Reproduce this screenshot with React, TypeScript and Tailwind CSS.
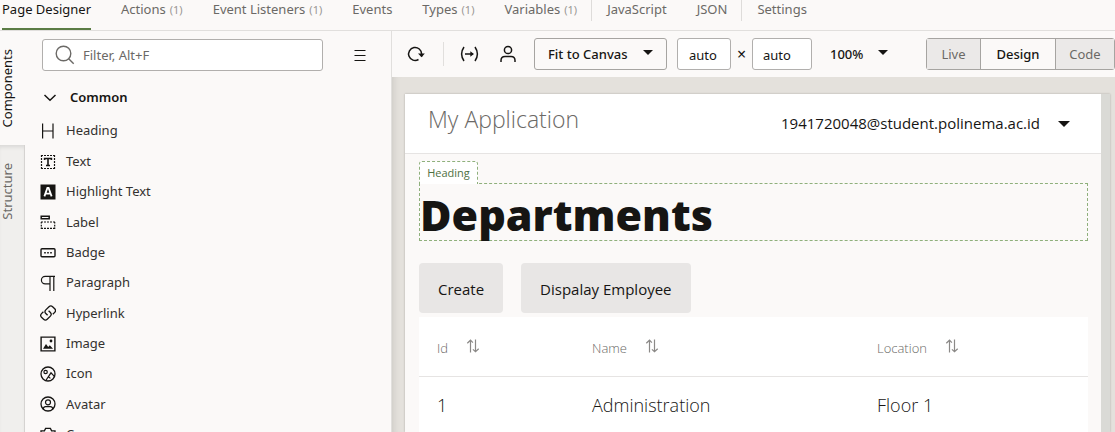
import type { ReactNode } from "react";

const tabs = [
  { label: "Page Designer", active: true },
  { label: "Actions", count: 1 },
  { label: "Event Listeners", count: 1 },
  { label: "Events" },
  { label: "Types", count: 1 },
  { label: "Variables", count: 1 },
  { label: "JavaScript", divided: true },
  { label: "JSON" },
  { label: "Settings", divided: true },
];

function Glyph({ children }: { children: ReactNode }) {
  return (
    <svg viewBox="0 0 16 16" className="size-4 shrink-0" fill="none" stroke="#161513" strokeWidth="1.2" aria-hidden="true">
      {children}
    </svg>
  );
}

const components: { label: string; icon: ReactNode }[] = [
  { label: "Heading", icon: <path d="M2.6.5v15M13 .5v15M2.6 8H13" /> },
  {
    label: "Text",
    icon: (
      <>
        <path d="M1 1.5h14M1 14.5h14" strokeDasharray="2 1" />
        <path d="M1.5 1v14M14.5 1v14" strokeDasharray="2 1" />
        <path d="M4.6 6V4.5h6.8V6M8 4.5v7M6 11.5h4" strokeWidth="1.6" />
      </>
    ),
  },
  {
    label: "Highlight Text",
    icon: (
      <>
        <path d="M.5.5h15v15H.5z" fill="#161513" stroke="none" />
        <path d="M4.4 12.4 7.4 4h1.2l3 8.4M5.6 9.6h4.8" stroke="#fff" strokeWidth="1.8" />
      </>
    ),
  },
  {
    label: "Label",
    icon: (
      <>
        <path d="M1.2 2.2h8v2.6h-8z" strokeWidth="1.5" />
        <path d="M1 8h15M1 14.4h15" strokeDasharray="2 1" />
        <path d="M1.3 8v7M14.7 8v7" strokeDasharray="1.6 1.2" />
      </>
    ),
  },
  {
    label: "Badge",
    icon: (
      <>
        <rect x="1" y="3.8" width="14" height="8" rx="1" strokeWidth="1.4" />
        <path d="M4.2 7.8h1.6M7.2 7.8h1.6M10.2 7.8h1.6" strokeWidth="1.5" />
      </>
    ),
  },
  { label: "Paragraph", icon: <path d="M15 1.3H5.2a3.7 3.7 0 0 0 0 7.6h4.6M10 1.3V16M13.8 1.3V16" /> },
  {
    label: "Hyperlink",
    icon: (
      <>
        <path d="M7 10.3 5.2 8.5a2.6 2.6 0 0 1 0-3.6L8.4 1.7a2.6 2.6 0 0 1 3.6 0l2.1 2.1a2.6 2.6 0 0 1 0 3.6L12.2 9.3" strokeWidth="1.3" transform="translate(.6 0)" />
        <path d="M9 5.7l1.8 1.8a2.6 2.6 0 0 1 0 3.6L7.6 14.3a2.6 2.6 0 0 1-3.6 0L1.9 12.2a2.6 2.6 0 0 1 0-3.6L3.8 6.7" strokeWidth="1.3" transform="translate(-.4 0)" />
      </>
    ),
  },
  {
    label: "Image",
    icon: (
      <>
        <path d="M1.1 1.1h13.8v13.8H1.1z" strokeWidth="1.4" />
        <path d="M3 12.8 6 8l2.2 3L9.8 9.2l3.2 3.6z" fill="#161513" stroke="none" />
        <circle cx="11" cy="5" r="1.4" fill="#161513" stroke="none" />
      </>
    ),
  },
  {
    label: "Icon",
    icon: (
      <>
        <circle cx="8" cy="8" r="7" strokeWidth="1.3" />
        <circle cx="5.6" cy="6" r="1.7" />
        <path d="M5.8 14.5 11 6.8l3.8 4M8.4 10.8l2 1.6" />
      </>
    ),
  },
  {
    label: "Avatar",
    icon: (
      <>
        <circle cx="8" cy="8" r="7" strokeWidth="1.3" />
        <circle cx="8" cy="6.3" r="2.5" />
        <path d="M3.3 13.2v-.4a2.3 2.3 0 0 1 2.3-2.1h4.8a2.3 2.3 0 0 1 2.3 2.1v.4" />
      </>
    ),
  },
  {
    label: "Camera",
    icon: (
      <>
        <path d="M1 14V3.8h3.4L5.6 1.4h4.8l1.2 2.4H15V14z" strokeWidth="1.3" />
        <circle cx="8" cy="8.5" r="3" />
      </>
    ),
  },
];

function Caret() {
  return (
    <svg viewBox="0 0 10 5" className="h-[5px] w-2.5 shrink-0" aria-hidden="true">
      <path d="M0 0h10L5 5z" fill="#161513" />
    </svg>
  );
}

function SortIcon() {
  return (
    <svg viewBox="0 0 14 14" className="size-3.5" fill="none" stroke="#8b8987" strokeWidth="1.2" aria-hidden="true">
      <path d="M4.5 13.5V1.2M1.3 4.2l3.2-3 2.4 2.4M9.5.5v12.3M6.9 10.4l2.6 2.4 3.2-3" />
    </svg>
  );
}

function ColumnHeader({ label, width }: { label: string; width: string }) {
  return (
    <th scope="col" className={`${width} pl-[18px] text-left font-light`}>
      <div className="flex items-center gap-[18px]">
        <span className="pt-1">{label}</span>
        <button type="button" aria-label={`Sort by ${label}`}>
          <SortIcon />
        </button>
      </div>
    </th>
  );
}

export default function App() {
  return (
    <div className="flex h-screen flex-col overflow-hidden bg-[#fbf9f8] font-['Noto_Sans',sans-serif] text-[13px] text-[#161513]">
      <nav className="flex h-[31px] shrink-0 border-b border-[#e1dfdd] pl-0.5">
        {tabs.map((t) => (
          <div key={t.label} className="flex">
            {t.divided && <span className="-ml-4 mr-[15px] h-[21px] w-px bg-[#dedcda]" />}
            <a
              href="#"
              aria-current={t.active ? "page" : undefined}
              className={`mr-[30px] flex items-baseline gap-1 whitespace-nowrap border-b-2 leading-[18px] ${
                t.active ? "border-[#5b7c45]" : "border-transparent text-[#6b6966]"
              }`}
            >
              {t.label}
              {t.count && <span className="text-[11px] text-[#9a9794]">({t.count})</span>}
            </a>
          </div>
        ))}
      </nav>

      <div className="flex min-h-0 flex-1">
        <div className="flex w-[25px] shrink-0 flex-col text-[13px]">
          <button type="button" className="flex h-[114px] w-full items-center">
            <span className="rotate-180 whitespace-nowrap leading-[14px] [writing-mode:vertical-rl]">Components</span>
          </button>
          <button
            type="button"
            className="flex w-full flex-1 items-start border-r border-[#d5d3d1] bg-[#f0efed] pt-[18px] text-[#6b6966] shadow-[inset_0_4px_4px_-2px_rgba(0,0,0,0.1)]"
          >
            <span className="rotate-180 whitespace-nowrap leading-[14px] [writing-mode:vertical-rl]">Structure</span>
          </button>
        </div>

        <aside className="flex w-[367px] shrink-0 flex-col border-r border-[#e1dfdd] pt-2">
          <div className="flex items-center pl-[17px]">
            <label className="flex h-8 w-[281px] items-center gap-2 rounded-[3px] border border-[#b1afad] bg-white pl-3">
              <svg viewBox="0 0 20 20" className="size-5 shrink-0" fill="none" stroke="#6b6966" strokeWidth="1.4" aria-hidden="true">
                <circle cx="8.5" cy="8.5" r="7.3" />
                <path d="m13.7 13.7 5 5" />
              </svg>
              <input aria-label="Filter" placeholder="Filter, Alt+F" className="min-w-0 flex-1 bg-transparent pt-0.5 outline-none placeholder:text-[#6b6966]" />
            </label>
            <button type="button" aria-label="View options" className="ml-[31px]">
              <svg viewBox="0 0 12 12" className="size-3" stroke="#161513" strokeWidth="1.2" aria-hidden="true">
                <path d="M.5 1.5h11M.5 6.5h11M.5 11.5h11" />
              </svg>
            </button>
          </div>
          <button type="button" className="mt-[15px] flex h-6 shrink-0 items-center gap-[13px] pl-[18px] font-semibold">
            <svg viewBox="0 0 14 8" className="h-2 w-3.5" fill="none" stroke="#161513" strokeWidth="1.5" aria-hidden="true">
              <path d="m1.5 1 5.5 5.2L12.5 1" />
            </svg>
            Common
          </button>
          <ul className="mt-1.5 grid h-[334px] shrink-0 auto-rows-fr pl-[15px] text-[#33312f]">
            {components.map((c) => (
              <li key={c.label} className="flex items-center gap-2.5">
                <Glyph>{c.icon}</Glyph>
                {c.label}
              </li>
            ))}
          </ul>
        </aside>

        <main className="flex min-w-0 flex-1 flex-col">
          <div className="flex h-[46px] shrink-0 items-center">
            <button type="button" aria-label="Refresh" className="ml-[15px]">
              <svg viewBox="0 0 18 16" className="h-4 w-[18px]" fill="none" stroke="#161513" strokeWidth="1.5" aria-hidden="true">
                <path d="M11.5 13.5A6.5 6.5 0 1 1 14.6 8v2.5" />
                <path d="M11 7.6h6.8l-3.2 3.7z" fill="#161513" stroke="none" />
              </svg>
            </button>
            <span className="ml-[18px] h-6 w-px bg-[#e1dfdd]" />
            <button type="button" aria-label="Parameters" className="ml-4">
              <svg viewBox="0 0 19 16" className="h-4 w-[19px]" fill="none" stroke="#161513" strokeWidth="1.5" aria-hidden="true">
                <path d="M4 1Q-.8 8 4 15M15 1q4.8 7 0 14M5 8h8" />
                <path d="M10.3 5.3 14 8l-3.7 2.7z" fill="#161513" stroke="none" />
              </svg>
            </button>
            <button type="button" aria-label="User" className="ml-[21px]">
              <svg viewBox="0 0 16 18" className="h-[18px] w-4" fill="none" stroke="#161513" strokeWidth="1.5" aria-hidden="true">
                <circle cx="8" cy="5" r="3.6" />
                <path d="M1 17v-1.5Q1 11.5 5 11.5h6q4 0 4 4V17" />
              </svg>
            </button>
            <div className="relative ml-[18px]">
              <select aria-label="Canvas size" className="h-8 w-[133px] appearance-none rounded-[3px] border border-[#a6a4a1] pl-[13px] pt-0.5 font-medium">
                <option>Fit to Canvas</option>
              </select>
              <span className="pointer-events-none absolute right-3.5 top-3">
                <Caret />
              </span>
            </div>
            <input aria-label="Width" defaultValue="auto" className="ml-2.5 h-8 w-[54px] rounded-[3px] border border-[#b1afad] bg-white pl-[11px] pt-0.5" />
            <span className="w-[21px] text-center text-base">×</span>
            <input aria-label="Height" defaultValue="auto" className="h-8 w-[60px] rounded-[3px] border border-[#b1afad] bg-white pl-2.5 pt-0.5" />
            <div className="relative ml-[18px]">
              <select aria-label="Zoom" className="h-8 w-[60px] appearance-none pt-0.5 font-medium">
                <option>100%</option>
              </select>
              <span className="pointer-events-none absolute right-0.5 top-3">
                <Caret />
              </span>
            </div>
            <div className="ml-9 flex h-8 flex-1 rounded-[3px] border border-[#a6a4a1] text-[#6b6966]">
              <button type="button" className="w-[53px] bg-[#ebe9e8] pt-0.5">Live</button>
              <button type="button" aria-pressed="true" className="w-[76px] border-x border-[#a6a4a1] pt-0.5 font-medium text-[#161513]">Design</button>
              <button type="button" className="flex-1 bg-[#ebe9e8] pt-0.5">Code</button>
            </div>
          </div>

          <div className="flex min-h-0 flex-1 bg-[#e4e1dc] pl-[13px] pt-[17px] font-['Open_Sans',sans-serif] shadow-[inset_8px_0_8px_-8px_rgba(0,0,0,0.15)]">
            <div className="mr-[5px] flex min-w-0 flex-1 bg-[#dadad6] pr-[9px] shadow-[0_0_2px_rgba(0,0,0,0.25)]">
              <section className="min-w-0 flex-1 bg-[#fbf9f8]">
                <header className="flex h-[60px] items-center justify-between border-b border-[#e6e4e3] bg-white pl-[23px] pr-[31px]">
                  <h1 className="pb-2 text-[23px] font-light text-[#6b6966]">My Application</h1>
                  <button type="button" className="flex items-center gap-[18px] text-[15px]">
                    1941720048@student.polinema.ac.id
                    <svg viewBox="0 0 12 6" className="h-1.5 w-3" aria-hidden="true">
                      <path d="M0 0h12L6 6z" fill="#161513" />
                    </svg>
                  </button>
                </header>
                <div className="pl-3.5 pr-[13px] pt-[7px]">
                  <div className="relative z-10 -mb-px flex h-[23px] w-[59px] items-center justify-center rounded-t-[3px] border border-b-0 border-dashed border-[#8fb07c] bg-white text-[11px] text-[#4f7042]">
                    Heading
                  </div>
                  <h2 className="h-[58px] border border-dashed border-[#8fb07c] text-[43px] font-extrabold leading-[62px]">Departments</h2>
                  <div className="mt-[22px] flex gap-[18px] text-[15px] font-medium">
                    <button type="button" className="h-[50px] rounded bg-[#e8e6e5] px-[19px] pt-0.5">Create</button>
                    <button type="button" className="h-[50px] rounded bg-[#e8e6e5] px-[19px] pt-0.5">Dispalay Employee</button>
                  </div>
                  <table className="mt-1 w-full table-fixed bg-white">
                    <thead>
                      <tr className="h-[59px] border-b border-[#e6e4e3] text-[13px] text-[#6b6966]">
                        <ColumnHeader label="Id" width="w-[155px]" />
                        <ColumnHeader label="Name" width="w-[285px]" />
                        <ColumnHeader label="Location" width="w-auto" />
                      </tr>
                    </thead>
                    <tbody>
                      <tr className="h-[58px] text-[18px] font-light">
                        <td className="pl-[18px]">1</td>
                        <td className="pl-[18px]">Administration</td>
                        <td className="pl-[18px]">Floor 1</td>
                      </tr>
                    </tbody>
                  </table>
                </div>
              </section>
            </div>
          </div>
        </main>
      </div>
    </div>
  );
}
